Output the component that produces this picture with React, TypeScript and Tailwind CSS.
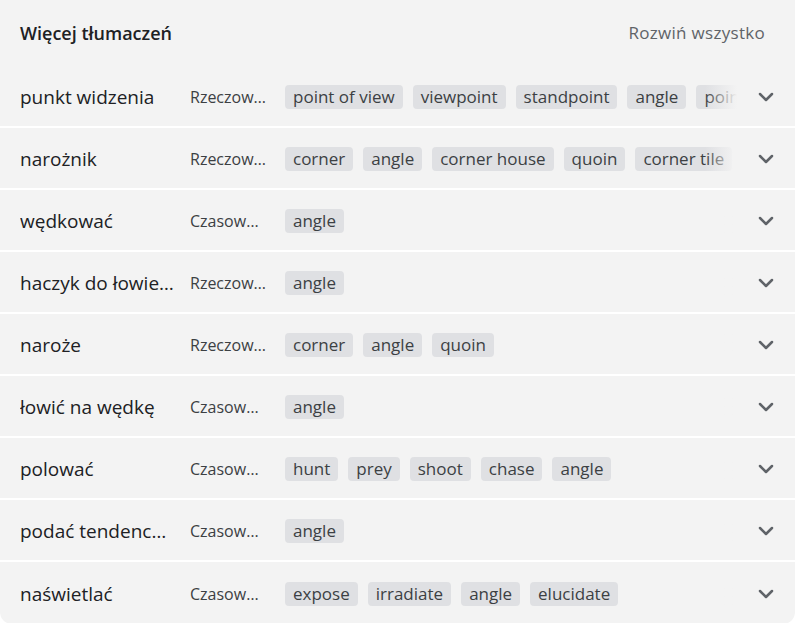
import { ChevronDown } from "lucide-react";

const rows = [
  { word: "punkt widzenia", pos: "Rzeczownik", chips: ["point of view", "viewpoint", "standpoint", "angle", "point"] },
  { word: "narożnik", pos: "Rzeczownik", chips: ["corner", "angle", "corner house", "quoin", "corner tile"] },
  { word: "wędkować", pos: "Czasownik", chips: ["angle"] },
  { word: "haczyk do łowienia", pos: "Rzeczownik", chips: ["angle"] },
  { word: "naroże", pos: "Rzeczownik", chips: ["corner", "angle", "quoin"] },
  { word: "łowić na wędkę", pos: "Czasownik", chips: ["angle"] },
  { word: "polować", pos: "Czasownik", chips: ["hunt", "prey", "shoot", "chase", "angle"] },
  { word: "podać tendencyjnie", pos: "Czasownik", chips: ["angle"] },
  { word: "naświetlać", pos: "Czasownik", chips: ["expose", "irradiate", "angle", "elucidate"] },
];

const App = () => {
  return (
    <div className="w-[801px] h-[623px] bg-white font-['Open_Sans',sans-serif]">
      <div className="w-[795px] bg-[#f3f3f3] rounded-b-xl">
        <div className="h-[66px] flex items-center justify-between pl-5 pr-[30px]">
          <h2 className="text-[18px] font-semibold text-[#202124]">Więcej tłumaczeń</h2>
          <button className="text-[17px] tracking-[0.3px] font-medium text-[#5f6368]">Rozwiń wszystko</button>
        </div>
        {rows.map((row, i) => (
          <div
            key={row.word}
            className={`h-[62px] flex items-center pl-5 pr-[17px] pt-[2px] ${
              i < rows.length - 1 ? "border-b-2 border-white" : ""
            }`}
          >
            <div className="w-[155px] shrink-0 truncate text-[19px] font-medium text-[#202124]">{row.word}</div>
            <div className="w-[78px] ml-[15px] shrink-0 truncate text-[16px] font-medium text-[#3c4043]">
              {row.pos}
            </div>
            <div className="relative ml-[17px] w-[452px] overflow-hidden">
              <div className="flex gap-[10px] whitespace-nowrap">
                {row.chips.map((c) => (
                  <span
                    key={c}
                    className="h-6 px-2 rounded bg-[#dfe0e3] text-[17px] leading-6 text-[#3c4043]"
                  >
                    {c}
                  </span>
                ))}
              </div>
              <div className="absolute right-0 top-0 h-full w-8 bg-gradient-to-r from-transparent to-[#f3f3f3]" />
            </div>
            <div className="ml-auto">
              <ChevronDown size={24} strokeWidth={2.5} className="text-[#5f6368]" />
            </div>
          </div>
        ))}
      </div>
    </div>
  );
};

export default App;
